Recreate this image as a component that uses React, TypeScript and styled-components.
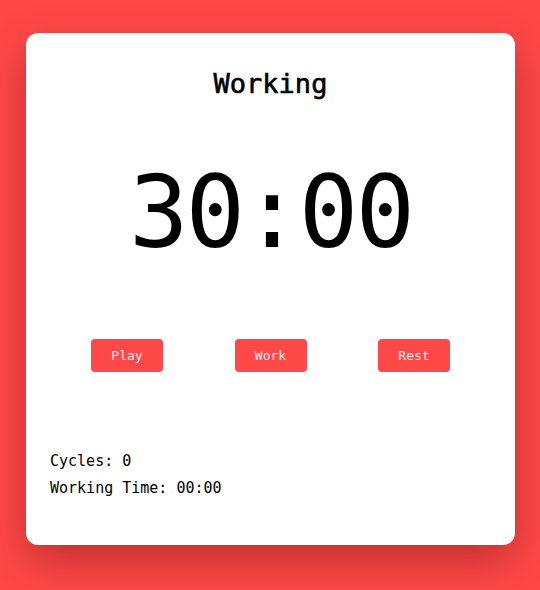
import React from 'react'
import styled, { createGlobalStyle } from 'styled-components'

const GlobalStyle = createGlobalStyle`
  html, body {
    margin: 0;
    padding: 0;
    background-color: #ff4848;
    font-family: "DejaVu Sans Mono", "Liberation Mono", monospace;
  }
`

const Page = styled.div`
  width: 540px;
  height: 590px;
  padding: 33px 25px 45px 26px;
  box-sizing: border-box;
  background-color: #ff4848;
`

const Card = styled.div`
  width: 489px;
  height: 512px;
  background-color: #ffffff;
  border-radius: 12px;
  box-shadow: 0 16px 40px rgba(90, 0, 0, 0.35);
  box-sizing: border-box;
  padding: 34px 24px 0 24px;
  display: flex;
  flex-direction: column;
`

const Title = styled.h1`
  margin: 0;
  text-align: center;
  font-size: 27px;
  font-weight: 400;
  -webkit-text-stroke: 0.6px #000;
  line-height: 34px;
  color: #000;
`

const Timer = styled.div`
  margin-top: 52px;
  text-align: center;
  font-size: 99px;
  letter-spacing: -3px;
  line-height: 120px;
  color: #000;
`

const Controls = styled.div`
  margin-top: 66px;
  display: flex;
  justify-content: space-between;
  padding: 0 41px;
`

const Button = styled.button`
  width: 72px;
  height: 33px;
  border: none;
  border-radius: 4px;
  background-color: #ff4848;
  color: #ffecec;
  font-family: "DejaVu Sans Mono", "Liberation Mono", monospace;
  font-size: 13px;
  cursor: pointer;
`

const Stats = styled.div`
  margin-top: 76px;
  display: flex;
  flex-direction: column;
`

const StatLine = styled.div`
  font-size: 15px;
  line-height: 27px;
  color: #000;
`

export default function App() {
  return (
    <>
      <GlobalStyle />
      <Page>
        <Card>
          <Title>Working</Title>
          <Timer>30:00</Timer>
          <Controls>
            <Button>Play</Button>
            <Button>Work</Button>
            <Button>Rest</Button>
          </Controls>
          <Stats>
            <StatLine>Cycles: 0</StatLine>
            <StatLine>Working Time: 00:00</StatLine>
          </Stats>
        </Card>
      </Page>
    </>
  )
}
